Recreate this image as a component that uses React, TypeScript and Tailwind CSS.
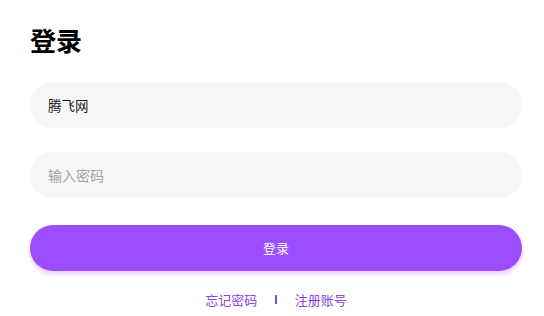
export default function App() {
  return (
    <div className="min-h-screen bg-white pt-[23px] pl-[30px] pr-[22px] font-['Noto_Sans_CJK_SC',sans-serif]">
      <h1 className="text-[26px] leading-[34px] font-bold text-black">登录</h1>

      <div className="mt-[25px] flex h-[46px] items-center rounded-full bg-[#f7f7f7] pl-[18px] text-[13.5px] text-[#1a1a1a]">
        腾飞网
      </div>

      <div className="mt-[24px] flex h-[46px] items-center rounded-full bg-[#f7f7f7] pl-[18px] text-[14px] text-[#a3a3a3]">
        输入密码
      </div>

      <button className="mt-[27px] flex h-[46px] w-full items-center justify-center rounded-full bg-[#9b4dff] text-[13px] text-white shadow-[0_3px_5px_rgba(155,77,255,0.28)]">
        登录
      </button>

      <div className="mt-[19px] flex items-center justify-center gap-[18px] text-[13px] text-[#8a45e0]">
        <span>忘记密码</span>
        <span className="h-[9px] w-[1.5px] bg-[#8a45e0]" />
        <span>注册账号</span>
      </div>
    </div>
  )
}
